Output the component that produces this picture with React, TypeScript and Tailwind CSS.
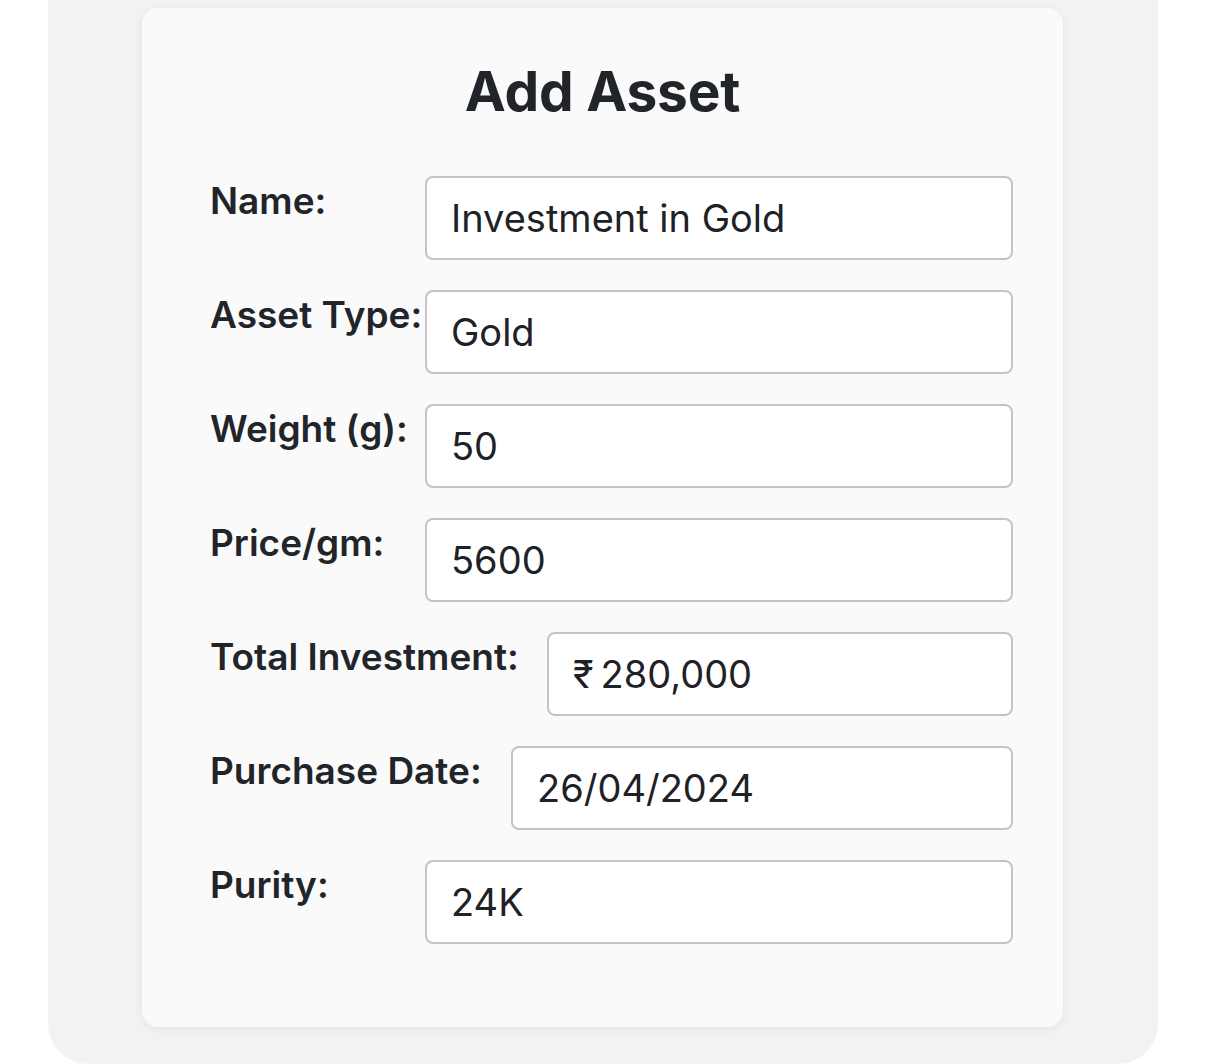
const fields = [
  { label: "Name:", value: "Investment in Gold", labelClass: "w-[215px]" },
  { label: "Asset Type:", value: "Gold", labelClass: "w-[215px]" },
  { label: "Weight (g):", value: "50", labelClass: "w-[215px]" },
  { label: "Price/gm:", value: "5600", labelClass: "w-[215px]" },
  { label: "Total Investment:", value: "₹\u2009280,000", labelClass: "w-[337px]" },
  { label: "Purchase Date:", value: "26/04/2024", labelClass: "w-[301px]" },
  { label: "Purity:", value: "24K", labelClass: "w-[215px]" },
];

export default function App() {
  return (
    <div
      className="min-h-screen w-full bg-white px-[48px] text-[#212529]"
      style={{ fontFamily: "Inter, 'Liberation Sans', sans-serif" }}
    >
      <div className="h-[1064px] w-[1110px] rounded-b-[40px] bg-[#f2f2f2] px-[94px] pt-[8px]">
        <div className="h-[1019px] w-[921px] rounded-[16px] bg-[#fafafa] pt-[50px] shadow-[0_2px_10px_rgba(0,0,0,0.06)]">
          <h1 className="text-center text-[55px] font-bold leading-[1.2] tracking-[-0.2px]">
            Add Asset
          </h1>
          <form className="mt-[52px] flex flex-col gap-[30px] pl-[68px] pr-[50px]">
            {fields.map((f) => (
              <div key={f.label} className="flex items-start">
                <label
                  className={`${f.labelClass} shrink-0 whitespace-nowrap pt-[3px] text-[37px] font-semibold leading-[1.2]`}
                >
                  {f.label}
                </label>
                <input
                  readOnly
                  value={f.value}
                  className="h-[84px] min-w-0 flex-1 rounded-[8px] border-2 border-[#c4c4c4] bg-white px-[24px] text-[38px] text-[#1e2125] outline-none"
                />
              </div>
            ))}
          </form>
        </div>
      </div>
    </div>
  );
}
